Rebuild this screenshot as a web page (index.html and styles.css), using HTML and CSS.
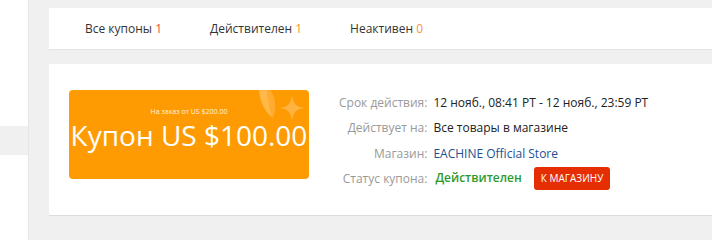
FILE: index.html
```html
<html lang="ru">
  <head>
    <meta charset="utf-8"/>
    <title>Мои купоны</title>
    <link rel="stylesheet" href="styles.css">
  </head>
  <body>
    <div class="side">
      <div class="side-item"></div>
    </div>
    <div class="main">
      <div class="tabs">
        <span class="tab">Все купоны <b class="num red">1</b></span>
        <span class="tab">Действителен <b class="num orange">1</b></span>
        <span class="tab">Неактивен <b class="num orange">0</b></span>
      </div>
      <div class="coupon-card">
        <div class="coupon">
          <svg class="deco" width="60" height="40" viewBox="0 0 60 40">
            <path d="M10 0 H18 C19 10 21 20 24 28 C16 22 11 12 10 0 Z" fill="#ffb84a"/>
            <path d="M18 0 H21 C26 6 28 16 24 28 C21 20 19 10 18 0 Z" fill="#ffac30"/>
            <path d="M43 5 C44 13 46 17 56 18 C46 19 44 23 43 31 C42 23 40 19 30 18 C40 17 42 13 43 5 Z" fill="#ffb340"/>
          </svg>
          <div class="coupon-min">На заказ от US $200.00</div>
          <div class="coupon-value">Купон US $100.00</div>
        </div>
        <table class="info">
          <tr>
            <td class="label">Срок действия:</td>
            <td class="value">12 нояб., 08:41 PT - 12 нояб., 23:59 PT</td>
          </tr>
          <tr>
            <td class="label">Действует на:</td>
            <td class="value">Все товары в магазине</td>
          </tr>
          <tr>
            <td class="label">Магазин:</td>
            <td class="value"><a class="store" href="#">EACHINE Official Store</a></td>
          </tr>
          <tr>
            <td class="label">Статус купона:</td>
            <td class="value">
              <span class="status">Действителен</span>
              <a class="btn" href="#">К МАГАЗИНУ</a>
            </td>
          </tr>
        </table>
      </div>
    </div>
  </body>
</html>
```
FILE: styles.css
```css
* {
  font-family: "Open Sans", Arial, sans-serif;
  box-sizing: border-box;
}
body {
  margin: 0;
  display: flex;
  height: 240px;
  overflow: hidden;
  background: #fff;
}
.side {
  width: 29px;
  border-right: 1px solid #e6e6e6;
  padding-top: 126px;
}
.side-item {
  height: 29px;
  background: #f0f0f0;
}
.main {
  flex: 1;
  background: #f0f0f0;
  padding: 8px 0 0 20px;
}
.tabs {
  background: #fff;
  height: 42px;
  border-bottom: 1px solid #e2e2e2;
  display: flex;
  align-items: center;
  padding-left: 36px;
  gap: 48px;
  font-size: 12px;
  color: #333;
}
.num {
  font-weight: normal;
}
.red {
  color: #e8533d;
}
.orange {
  color: #f7943a;
}
.coupon-card {
  background: #fff;
  margin-top: 14px;
  height: 152px;
  border-bottom: 1px solid #dcdcdc;
  display: flex;
  padding: 26px 0 0 20px;
}
.coupon {
  position: relative;
  width: 240px;
  height: 89px;
  background: #fe9b02;
  border-radius: 4px;
  color: #fff;
  text-align: center;
  overflow: hidden;
}
.deco {
  position: absolute;
  top: 0;
  right: 0;
}
.coupon-min {
  position: relative;
  font-size: 7px;
  margin-top: 17px;
  color: #fff3dc;
}
.coupon-value {
  position: relative;
  font-size: 28px;
  line-height: 34px;
  margin-top: 2px;
}
.info {
  margin-left: 30px;
  margin-top: 0;
  border-collapse: collapse;
  font-size: 12px;
  align-self: flex-start;
}
.info td {
  height: 25.3px;
  padding: 0;
  vertical-align: middle;
}
.label {
  color: #999;
  text-align: right;
  padding-right: 6px !important;
}
.value {
  color: #222;
}
.store {
  color: #1d4f91;
  text-decoration: none;
}
.status {
  color: #2c9a2c;
  font-weight: 600;
  margin-left: 2px;
}
.btn {
  display: inline-block;
  margin-left: 9px;
  background: #e62e04;
  color: #fff;
  text-decoration: none;
  font-size: 10px;
  padding: 0 7px;
  line-height: 23px;
  border-radius: 3px;
}
```
